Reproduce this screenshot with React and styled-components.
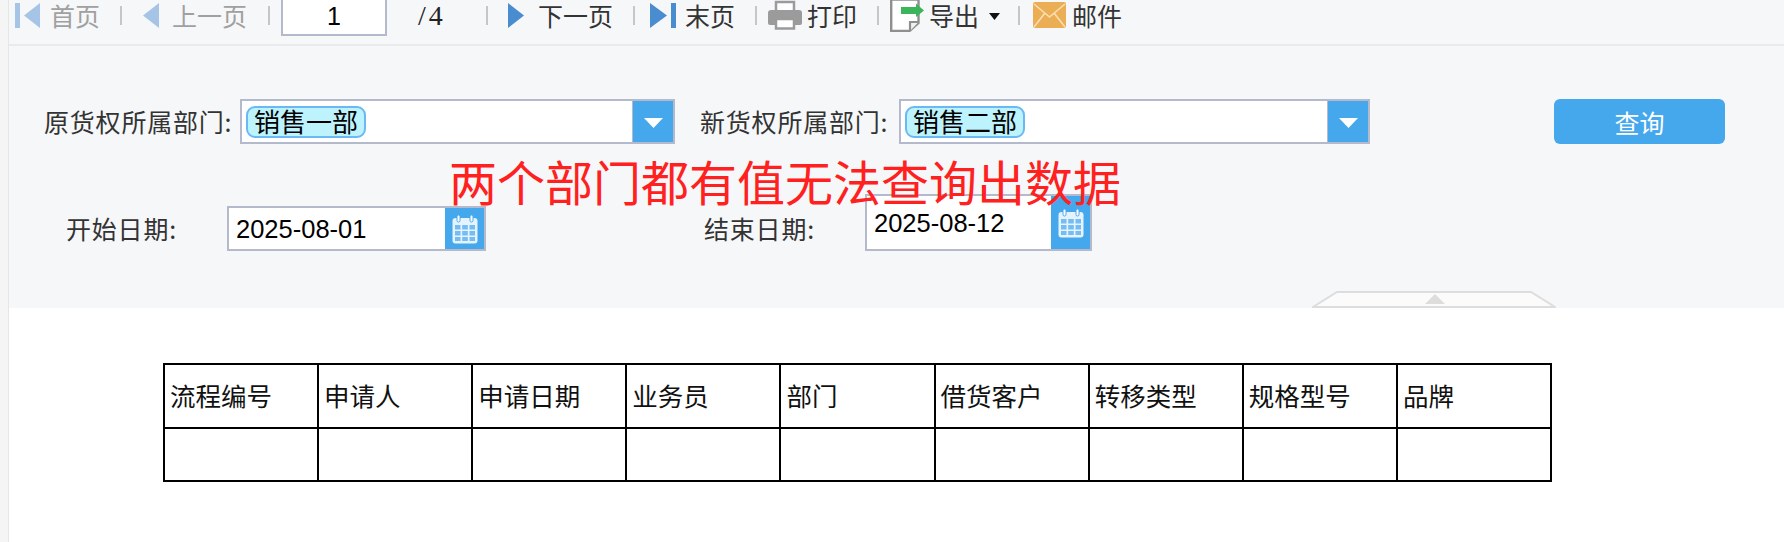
import React from "react";
import styled, { createGlobalStyle } from "styled-components";

const Global = createGlobalStyle`
  html, body { margin: 0; padding: 0; background: #f5f5f5; }
  body { font-family: "Noto Sans CJK SC", "Liberation Sans", sans-serif; overflow: hidden; }
`;

const Page = styled.div`
  box-sizing: border-box;
  height: 542px;
  padding-left: 8px;
`;
const Main = styled.div`
  height: 100%;
  border-left: 1px solid #e6e6e6;
  background: #fff;
`;
const Toolbar = styled.div`
  display: flex;
  align-items: flex-start;
  height: 44px;
  border-bottom: 2px solid #e9eaec;
  background: #f6f7f9;
`;
const ToolItem = styled.div`
  display: flex;
  align-items: center;
  gap: ${(p) => p.$gap ?? 6}px;
  height: 30px;
  margin-left: ${(p) => p.$ml ?? 0}px;
  color: ${(p) => (p.$off ? "#a0a0a0" : "#333")};
  font-size: 25px;
  line-height: 28px;
  white-space: nowrap;
  flex: none;
  svg { display: block; flex: none; }
`;
const ToolSep = styled.span`
  flex: none;
  width: 2px;
  height: 19px;
  margin: 6px 0 0 ${(p) => p.$ml}px;
  background: #c4c6c9;
`;
const PageInput = styled.div`
  flex: none;
  box-sizing: border-box;
  width: 106px;
  height: 36px;
  margin-left: ${(p) => p.$ml}px;
  border: 2px solid #b4b9cc;
  border-top: none;
  background: #fff;
  color: #000;
  font: 25px/32px "Liberation Sans", sans-serif;
  text-align: center;
`;
const PageTotal = styled.span`
  flex: none;
  width: 26px;
  margin-left: ${(p) => p.$ml}px;
  color: #222;
  font: 28px/32px "Liberation Serif", serif;
  letter-spacing: 3px;
`;
const CaretWrap = styled.span`
  display: block;
  margin: 3px 0 0 5px;
`;
const FormPanel = styled.div`
  position: relative;
  box-sizing: border-box;
  height: 262px;
  padding-top: 53px;
  background: #f6f7f9;
`;
const FormRow = styled.div`
  display: flex;
  align-items: flex-end;
  margin-top: ${(p) => p.$mt ?? 0}px;
`;
const FieldLabel = styled.label`
  flex: none;
  box-sizing: border-box;
  width: ${(p) => p.$w}px;
  height: 45px;
  margin-left: ${(p) => p.$ml}px;
  color: #333;
  font-size: 25px;
  letter-spacing: 0.8px;
  line-height: 44px;
  white-space: nowrap;
`;
const Combo = styled.div`
  flex: none;
  box-sizing: border-box;
  display: flex;
  align-items: center;
  width: ${(p) => p.$w}px;
  height: 45px;
  border: 2px solid #b4b9cc;
  background: #fff;
`;
const TagArea = styled.div`
  flex: 1;
  padding-left: 4px;
`;
const Tag = styled.span`
  display: inline-block;
  box-sizing: border-box;
  height: 32px;
  padding: 0 6px;
  border: 2px solid #6ab9f5;
  border-radius: 9px;
  background: #bdf3fd;
  color: #000;
  font-size: 26px;
  line-height: 26px;
`;
const ComboButton = styled.div`
  flex: none;
  align-self: stretch;
  display: flex;
  align-items: center;
  justify-content: center;
  width: 41px;
  padding-top: 3px;
  box-sizing: border-box;
  border-left: 1px solid #b4b9cc;
  background: #46a8ec;
`;
const DateField = styled.div`
  flex: none;
  box-sizing: border-box;
  display: flex;
  width: ${(p) => p.$w}px;
  height: ${(p) => p.$h}px;
  border: 2px solid #b4b9cc;
  background: #fff;
`;
const DateText = styled.div`
  flex: 1;
  padding: ${(p) => p.$top}px 0 0 7px;
  color: #000;
  font: 25.5px/30px "Liberation Sans", sans-serif;
`;
const DateButton = styled.div`
  flex: none;
  display: flex;
  align-items: center;
  justify-content: center;
  box-sizing: border-box;
  width: 39px;
  padding-top: 2px;
  background: #46a8ec;
`;
const QueryButton = styled.button`
  flex: none;
  width: 171px;
  height: 45px;
  margin-left: 184px;
  padding: 0;
  border: none;
  border-radius: 6px;
  background: #46a8ec;
  color: #fff;
  font-family: inherit;
  font-size: 25px;
`;
const Notice = styled.div`
  position: absolute;
  left: 440px;
  top: 102px;
  color: #ff2020;
  font-size: 48px;
  line-height: 64px;
  white-space: nowrap;
`;
const Handle = styled.svg`
  position: absolute;
  left: 1303px;
  bottom: 0;
  display: block;
`;
const DataTable = styled.table`
  box-sizing: border-box;
  width: 1389px;
  margin: 55px 0 0 154px;
  border-collapse: collapse;
  table-layout: fixed;
  color: #111;
  font-size: 25.5px;
`;
const HeadCell = styled.th`
  height: 64px;
  padding: 0 0 3px 5px;
  box-sizing: border-box;
  border: 2px solid #000;
  font-weight: 400;
  text-align: left;
  white-space: nowrap;
`;
const BodyCell = styled.td`
  height: 51px;
  padding: 0;
  border: 2px solid #000;
`;

const FirstIcon = ({ c }) => (
  <svg width="25" height="25" viewBox="0 0 25 25"><rect x="0" y="0" width="5" height="25" fill={c} /><path d="M25 0V25L9 12.5Z" fill={c} /></svg>
);
const PrevIcon = ({ c }) => (
  <svg width="16" height="25" viewBox="0 0 16 25"><path d="M16 0V25L0 12.5Z" fill={c} /></svg>
);
const NextIcon = ({ c }) => (
  <svg width="16" height="25" viewBox="0 0 16 25"><path d="M0 0V25L16 12.5Z" fill={c} /></svg>
);
const LastIcon = ({ c }) => (
  <svg width="26" height="25" viewBox="0 0 26 25"><path d="M0 0V25L17 12.5Z" fill={c} /><rect x="21" y="0" width="5" height="25" fill={c} /></svg>
);
const PrintIcon = () => (
  <svg width="34" height="30" viewBox="0 0 34 30">
    <path d="M8 11V2h18v9" fill="#fff" stroke="#9b9b9b" strokeWidth="2.5" />
    <path d="M3 10h28a3 3 0 0 1 3 3v10a2 2 0 0 1-2 2H2a2 2 0 0 1-2-2V13a3 3 0 0 1 3-3z" fill="#9b9b9b" />
    <path d="M8 19h18v9.500H8z" fill="#fff" stroke="#9b9b9b" strokeWidth="2.5" />
  </svg>
);
const ExportIcon = () => (
  <svg width="34" height="33" viewBox="0 0 34 33">
    <path d="M1.200 0.500H28.500V24L19.500 32H1.200Z" fill="#fff" stroke="#8f8f8f" strokeWidth="2.4" />
    <path d="M28.500 23H20V32" fill="#f1f1f1" stroke="#8f8f8f" strokeWidth="2.2" />
    <path d="M11 8H26V4.500L34 11.500L26 18V15H11Z" fill="#3cb55a" />
  </svg>
);
const MailIcon = () => (
  <svg width="33" height="26" viewBox="0 0 33 26">
    <rect width="33" height="26" rx="2" fill="#ecae54" />
    <path d="M1 2L16.500 15L32 2M1 25L12 11M32 25L21 11" fill="none" stroke="#f8e0b4" strokeWidth="1.600" />
  </svg>
);
const CaretIcon = () => (
  <svg width="11" height="7" viewBox="0 0 11 7"><path d="M0 0H11L5.500 7Z" fill="#111" /></svg>
);
const ArrowDown = () => (
  <svg width="19" height="10" viewBox="0 0 19 10"><path d="M0 0H19L9.500 10Z" fill="#fff" /></svg>
);
const CalendarIcon = () => (
  <svg width="26" height="29" viewBox="0 0 26 29">
    <rect x="0.500" y="3" width="25" height="25.500" rx="3" fill="#e4f3fd" />
    <rect x="5" y="0" width="3" height="7" rx="1.500" fill="#fff" stroke="#46a8ec" strokeWidth="1" />
    <rect x="18" y="0" width="3" height="7" rx="1.500" fill="#fff" stroke="#46a8ec" strokeWidth="1" />
    <path d="M3 10h5.500v4.500H3zM10.200 10h5.600v4.500h-5.600zM17.500 10H23v4.500h-5.500zM3 16h5.500v4.500H3zM10.200 16h5.600v4.500h-5.600zM17.500 16H23v4.500h-5.500zM3 22h5.500v4H3zM10.200 22h5.600v4h-5.600zM17.500 22H23v4h-5.500z" fill="#74bcf1" />
  </svg>
);

const columns = ["流程编号", "申请人", "申请日期", "业务员", "部门", "借货客户", "转移类型", "规格型号", "品牌"];

export default function App() {
  return (
    <Page>
      <Global />
      <Main>
        <Toolbar>
          <ToolItem $off $ml={6} $gap={10}><FirstIcon c="#a6c5e6" />首页</ToolItem>
          <ToolSep $ml={20} />
          <ToolItem $off $ml={21} $gap={13}><PrevIcon c="#a6c5e6" />上一页</ToolItem>
          <ToolSep $ml={21} />
          <PageInput $ml={11}>1</PageInput>
          <PageTotal $ml={31}>/4</PageTotal>
          <ToolSep $ml={42} />
          <ToolItem $ml={20} $gap={14}><NextIcon c="#4a8cd0" />下一页</ToolItem>
          <ToolSep $ml={20} />
          <ToolItem $ml={15} $gap={9}><LastIcon c="#4a8cd0" />末页</ToolItem>
          <ToolSep $ml={20} />
          <ToolItem $ml={11} $gap={5}><PrintIcon />打印</ToolItem>
          <ToolSep $ml={20} />
          <ToolItem $ml={11} $gap={5}><ExportIcon />导出<CaretWrap><CaretIcon /></CaretWrap></ToolItem>
          <ToolSep $ml={18} />
          <ToolItem $ml={13} $gap={6}><MailIcon />邮件</ToolItem>
        </Toolbar>
        <FormPanel>
          <FormRow>
            <FieldLabel $ml={35} $w={196}>原货权所属部门:</FieldLabel>
            <Combo $w={435}>
              <TagArea><Tag>销售一部</Tag></TagArea>
              <ComboButton><ArrowDown /></ComboButton>
            </Combo>
            <FieldLabel $ml={25} $w={199}>新货权所属部门:</FieldLabel>
            <Combo $w={471}>
              <TagArea><Tag>销售二部</Tag></TagArea>
              <ComboButton><ArrowDown /></ComboButton>
            </Combo>
            <QueryButton>查询</QueryButton>
          </FormRow>
          <FormRow $mt={50}>
            <FieldLabel $ml={57} $w={161}>开始日期:</FieldLabel>
            <DateField $w={259} $h={45}>
              <DateText $top={6}>2025-08-01</DateText>
              <DateButton><CalendarIcon /></DateButton>
            </DateField>
            <FieldLabel $ml={218} $w={161}>结束日期:</FieldLabel>
            <DateField $w={227} $h={57}>
              <DateText $top={12}>2025-08-12</DateText>
              <DateButton><CalendarIcon /></DateButton>
            </DateField>
          </FormRow>
          <Notice>两个部门都有值无法查询出数据</Notice>
          <Handle width="244" height="17" viewBox="0 0 244 17">
            <path d="M1 16L25 1H219L243 16Z" fill="#fbfbfb" stroke="#dddddd" strokeWidth="2" />
            <path d="M123 3L133 13H113Z" fill="#dddddd" />
          </Handle>
        </FormPanel>
        <DataTable>
          <thead>
            <tr>{columns.map((c) => <HeadCell key={c}>{c}</HeadCell>)}</tr>
          </thead>
          <tbody>
            <tr>{columns.map((c) => <BodyCell key={c} />)}</tr>
          </tbody>
        </DataTable>
      </Main>
    </Page>
  );
}
